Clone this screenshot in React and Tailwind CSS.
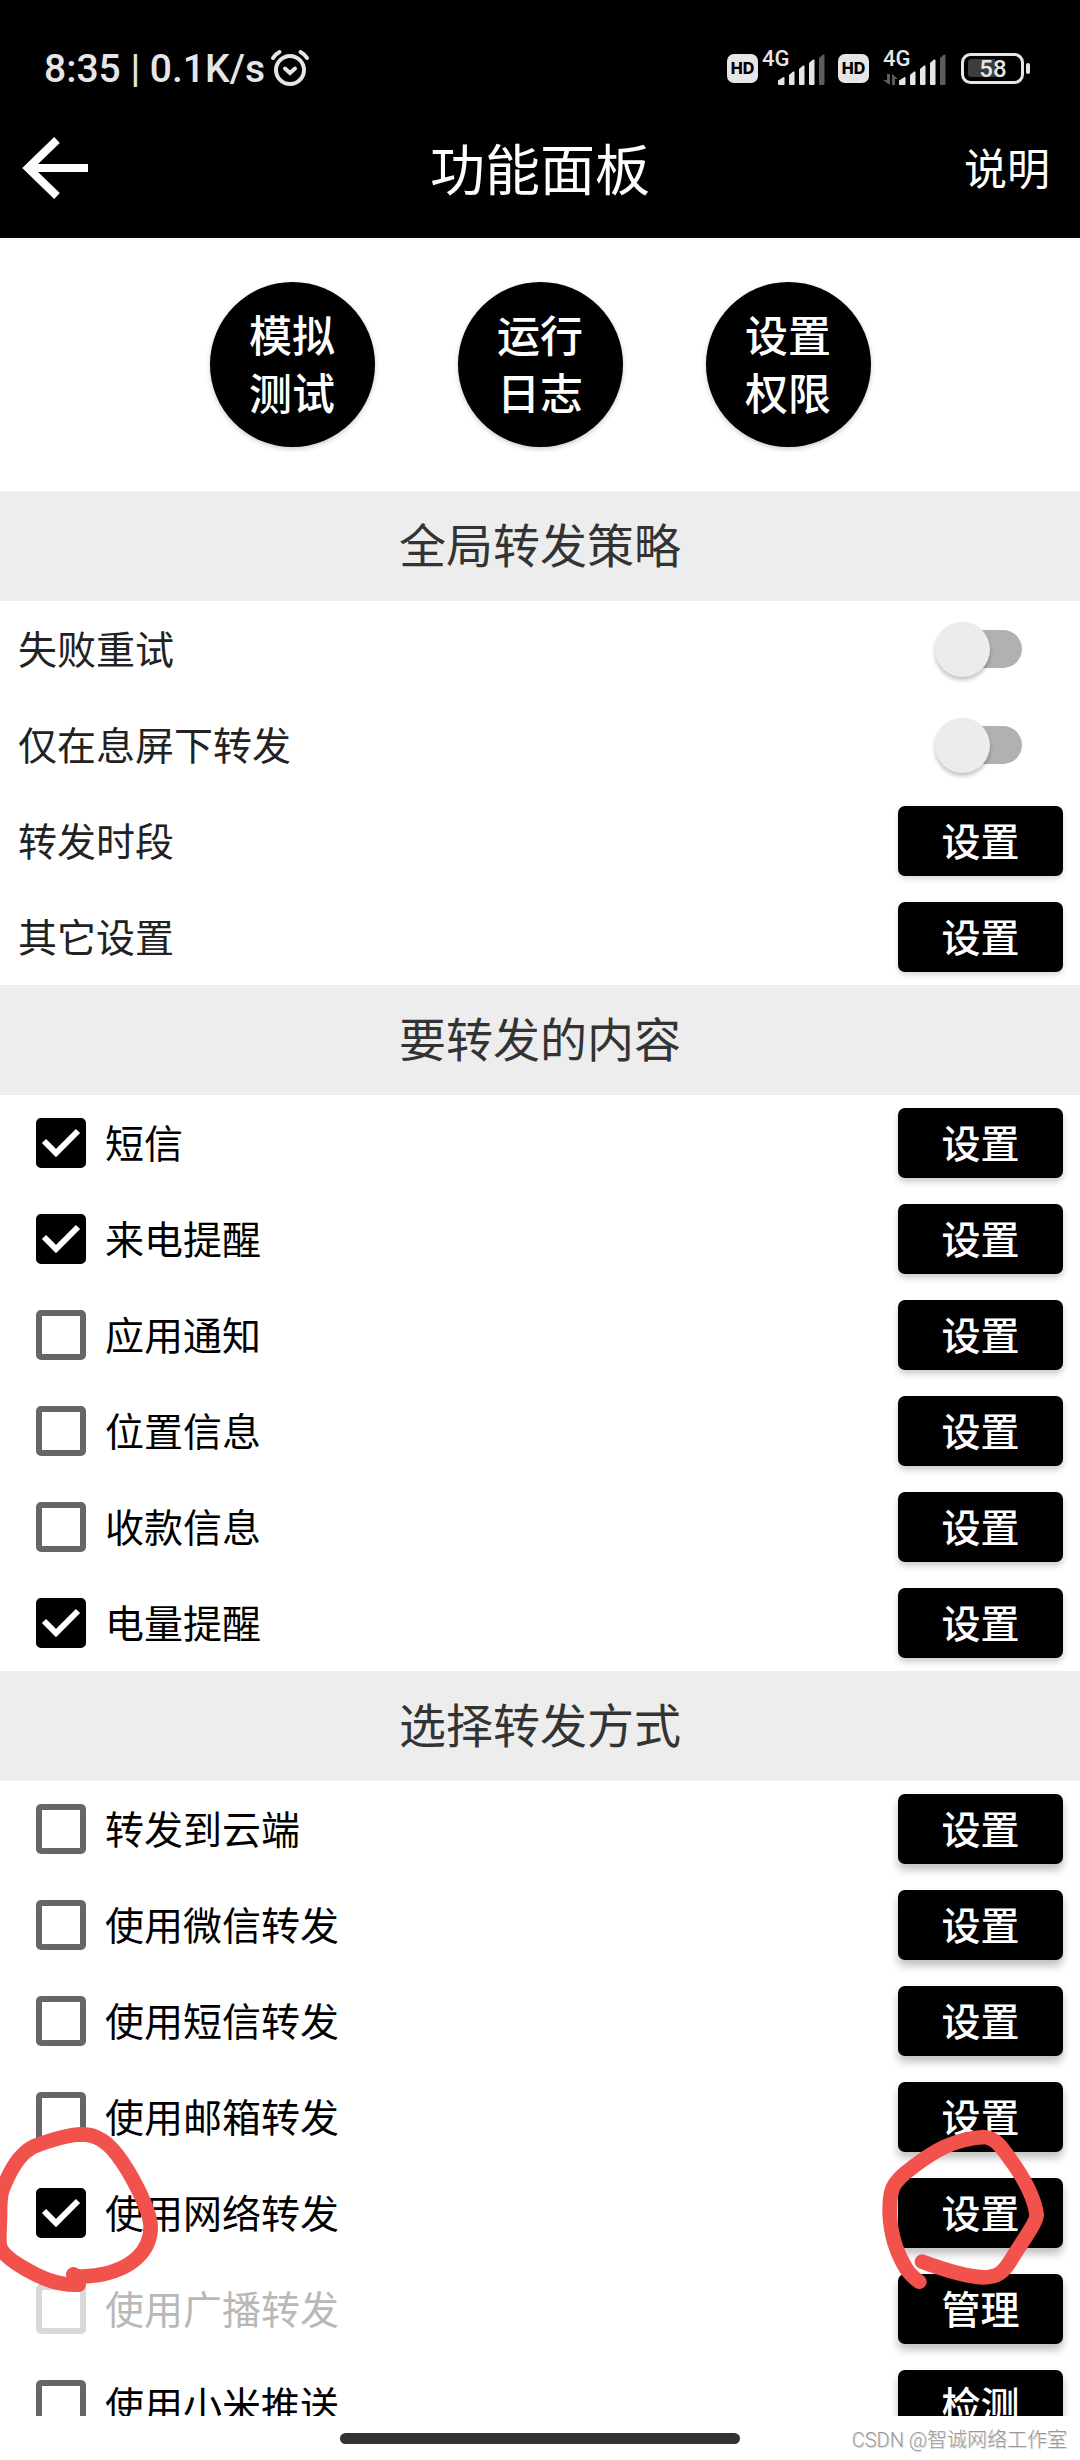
import { useState } from "react";

const accesos = [
  ["模拟", "测试"],
  ["运行", "日志"],
  ["设置", "权限"],
];

const estrategia = [
  { texto: "失败重试", tipo: "switch" },
  { texto: "仅在息屏下转发", tipo: "switch" },
  { texto: "转发时段", accion: "设置" },
  { texto: "其它设置", accion: "设置" },
];

const contenidos = [
  { texto: "短信", activo: true, accion: "设置" },
  { texto: "来电提醒", activo: true, accion: "设置" },
  { texto: "应用通知", accion: "设置" },
  { texto: "位置信息", accion: "设置" },
  { texto: "收款信息", accion: "设置" },
  { texto: "电量提醒", activo: true, accion: "设置" },
];

const metodos = [
  { texto: "转发到云端", accion: "设置" },
  { texto: "使用微信转发", accion: "设置" },
  { texto: "使用短信转发", accion: "设置" },
  { texto: "使用邮箱转发", accion: "设置" },
  { texto: "使用网络转发", activo: true, accion: "设置", marcado: true },
  { texto: "使用广播转发", accion: "管理", deshabilitado: true },
  { texto: "使用小米推送", accion: "检测" },
];

const Senal = ({ datos }) => (
  <svg width="66" height="48" viewBox="0 -6 66 48" className="font-['Roboto',sans-serif]">
    <text x="0" y="16" fontSize="22" fontWeight="500" fill="#e6e6e6">4G</text>
    {datos && (
      <g fill="#5c5c5c">
        <path d="M2 24v0h5v11l-7-5h4v-6z" />
        <path d="M9 35V24l6 5h-3v6z" />
      </g>
    )}
    <g fill="#e6e6e6">
      <path d="M16 30.500l5.500-3.500q1-.5 1 1v6q0 1-1 1h-4.500q-1 0-1-1z" />
      <path d="M27 25l4-3.500q1.500-.5 1.500 1V34q0 1-1 1H28q-1 0-1-1z" />
      <path d="M37 19l4-3.500q1.500-.5 1.500 1V34q0 1-1 1H38q-1 0-1-1z" />
      <path d="M47 13l4-3.500q1.500-.5 1.500 1V34q0 1-1 1H48q-1 0-1-1z" />
    </g>
    <path d="M57 8l4-3.500q1.500-.5 1.500 1V34q0 1-1 1H58q-1 0-1-1z" fill="#5c5c5c" />
  </svg>
);

const Hd = () => (
  <span className="flex h-[29px] w-[31px] items-center justify-center rounded-[7px] bg-[#e6e6e6] font-['Inter',sans-serif] text-[16px] font-extrabold leading-none text-black">
    HD
  </span>
);

const BarraEstado = () => (
  <div className="flex items-center justify-between pt-[38px] pl-[44px] pr-[49px] text-[#e6e6e6]">
    <div className="flex h-[60px] items-center gap-[5px]">
      <span className="pt-[2px] font-['Roboto',sans-serif] text-[39px] font-medium leading-none">8:35 | 0.1K/s</span>
      <svg width="40" height="38" viewBox="0 0 40 38" fill="none" stroke="#e6e6e6" strokeWidth="4" strokeLinecap="round">
        <circle cx="20" cy="21" r="14" />
        <path d="M15 19.500l5 4.500 5-4.500M3 9q2.500-4 6.500-6M37 9q-2.500-4-6.500-6" />
      </svg>
    </div>
    <div className="flex h-[60px] items-center">
      <Hd />
      <div className="pl-[4px]">
        <Senal />
      </div>
      <div className="pl-[10px]">
        <Hd />
      </div>
      <div className="pl-[14px]">
        <Senal datos />
      </div>
      <svg width="70" height="32" viewBox="0 0 70 32" className="ml-[12px] font-['Roboto',sans-serif]">
        <rect x="1.500" y="2.500" width="60" height="28" rx="8" fill="none" stroke="#e6e6e6" strokeWidth="3" />
        <path d="M10 7h24v18H10q-3 0-3-3V10q0-3 3-3z" fill="#3c3c3c" />
        <rect x="65" y="11" width="4" height="11" rx="2" fill="#e6e6e6" />
        <text x="32" y="25" fontSize="24" fontWeight="500" textAnchor="middle" fill="#e6e6e6">58</text>
      </svg>
    </div>
  </div>
);

const Casilla = ({ id, activo, deshabilitado, onChange }) => (
  <span className="grid">
    <input
      id={id}
      type="checkbox"
      checked={activo}
      disabled={deshabilitado}
      onChange={onChange}
      className="col-start-1 row-start-1 size-[50px] appearance-none rounded-[5px] border-[6px] border-[#666666] checked:border-black checked:bg-black disabled:border-[#d8d8d8]"
    />
    {activo && (
      <svg viewBox="0 0 50 50" className="pointer-events-none col-start-1 row-start-1 size-[50px]" fill="none" stroke="white" strokeWidth="6">
        <path d="M8 23l12 12 22-22" />
      </svg>
    )}
  </span>
);

// Trazos rojos dibujados a mano alrededor de la casilla y del botón
const Marcas = () => (
  <>
    <svg viewBox="0 120 480 540" className="pointer-events-none absolute -top-[45px] left-0 z-10 h-[180px] w-[160px]" fill="none" stroke="#f1524b" strokeWidth="44" strokeLinecap="round" strokeLinejoin="round">
      <path d="M220 583C225 592 255 590 290 586C400 568 452 510 452 440C450 385 390 275 350 223C310 170 270 158 220 165C170 173 130 188 100 200C65 218 40 255 22 295C5 330 0 340 0 400C0 450-5 480 0 500C10 530 60 560 110 585C150 605 190 616 236 614L236 590" />
    </svg>
    <svg viewBox="120 120 510 540" className="pointer-events-none absolute -top-[45px] right-[30px] z-10 h-[180px] w-[170px]" fill="none" stroke="#f1524b" strokeWidth="44" strokeLinecap="round" strokeLinejoin="round">
      <path d="M246 545C300 565 380 590 430 592C475 592 490 575 510 545C535 500 590 430 590 405C585 360 560 310 525 258C490 210 470 172 430 171C340 177 280 215 220 260C150 310 150 330 149 400C152 470 170 520 200 568C215 588 225 597 238 605" />
    </svg>
  </>
);

const Fila = ({ id, item, conCasilla, sombra }) => {
  const [activo, setActivo] = useState(Boolean(item.activo));
  const cambiar = () => setActivo(!activo);

  return (
    <li className="relative flex h-[96px] items-center justify-between pr-[17px] text-[39px] leading-[56px]">
      {conCasilla ? (
        <div className="flex items-center gap-[19px] pl-[36px]">
          <Casilla id={id} activo={activo} deshabilitado={item.deshabilitado} onChange={cambiar} />
          <label htmlFor={id} className={`pb-[5px] ${item.deshabilitado ? "text-[#b8b8b8]" : "text-black"}`}>
            {item.texto}
          </label>
        </div>
      ) : (
        <label htmlFor={id} className="pb-[5px] pl-[18px] text-[#222222]">
          {item.texto}
        </label>
      )}

      {item.tipo === "switch" ? (
        <input
          id={id}
          type="checkbox"
          role="switch"
          checked={activo}
          onChange={cambiar}
          className="relative mr-[41px] h-[38px] w-[80px] appearance-none rounded-full bg-[#b1b1b1] before:absolute before:-top-[8px] before:-left-[7px] before:size-[55px] before:rounded-full before:bg-[#ececec] before:shadow-[0_3px_4px_rgba(0,0,0,0.25)] checked:before:left-[32px]"
        />
      ) : (
        <button
          id={conCasilla ? undefined : id}
          className={`h-[70px] w-[165px] rounded-[7px] bg-black pb-[5px] font-medium text-white ${sombra}`}
        >
          {item.accion}
        </button>
      )}
      {item.marcado && <Marcas />}
    </li>
  );
};

const Seccion = ({ titulo, clave, items, conCasilla, sombra }) => (
  <section>
    <h2 className="bg-[#ededed] pt-[17px] pb-[23px] text-center text-[47px] leading-[70px] text-[#333333]">{titulo}</h2>
    <ul>
      {items.map((item, i) => (
        <Fila key={item.texto} id={`${clave}-${i}`} item={item} conCasilla={conCasilla} sombra={sombra} />
      ))}
    </ul>
  </section>
);

const App = () => {
  return (
    <div className="flex h-screen flex-col bg-white font-['Noto_Sans_CJK_SC',sans-serif]">
      <header className="shrink-0 bg-black text-white">
        <BarraEstado />
        <div className="grid h-[140px] grid-cols-[1fr_auto_1fr] items-center">
          <button aria-label="返回" className="justify-self-start pl-[22px]">
            <svg width="66" height="62" viewBox="0 0 66 62" fill="none" stroke="white" strokeWidth="8">
              <path d="M35 3L6 31l29 28M8 31h58" />
            </svg>
          </button>
          <h1 className="pb-[5px] text-[55px] leading-[80px]">功能面板</h1>
          <a href="#ayuda" className="justify-self-end pr-[30px] pb-[5px] text-[43px] leading-[64px]">
            说明
          </a>
        </div>
      </header>

      <main className="min-h-0 flex-1 overflow-x-hidden overflow-y-auto [scrollbar-width:none]">
        {/* Accesos rápidos */}
        <div className="flex justify-center gap-[83px] py-[44px]">
          {accesos.map(([arriba, abajo]) => (
            <button
              key={arriba}
              className="size-[165px] rounded-full bg-black pb-[5px] text-[43px] font-medium leading-[58px] text-white shadow-[0_2px_5px_rgba(0,0,0,0.2)]"
            >
              {arriba}
              <br />
              {abajo}
            </button>
          ))}
        </div>

        <Seccion titulo="全局转发策略" clave="estrategia" items={estrategia} sombra="shadow-[0_3px_5px_rgba(0,0,0,0.15)]" />
        <Seccion titulo="要转发的内容" clave="contenido" items={contenidos} conCasilla sombra="shadow-[0_4px_6px_rgba(0,0,0,0.2)]" />
        <Seccion titulo="选择转发方式" clave="metodo" items={metodos} conCasilla sombra="shadow-[0_6px_8px_rgba(0,0,0,0.25)]" />
      </main>

      {/* Barra inferior */}
      <footer className="grid h-[44px] shrink-0 grid-cols-[1fr_37%_1fr] items-center">
        <span />
        <span className="h-[11px] rounded-full bg-[#333333]" />
        <span className="justify-self-end pr-[13px] pt-[3px] whitespace-nowrap font-['Roboto','Noto_Sans_CJK_SC',sans-serif] text-[20px] font-light leading-none text-[#999999] [text-shadow:1px_1px_0_#dddddd]">
          CSDN @智诚网络工作室
        </span>
      </footer>
    </div>
  );
};

export default App;
